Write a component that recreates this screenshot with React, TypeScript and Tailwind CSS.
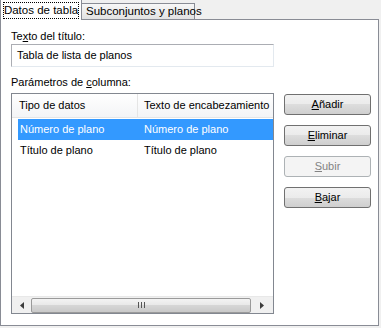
const font = { fontFamily: '"Liberation Sans", Arial, sans-serif' };

const Btn = ({ k, rest, disabled }: { k: string; rest: string; disabled?: boolean }) => (
  <button
    className={
      disabled
        ? "h-[21px] w-[87px] rounded-[3px] border border-[#adb2b5] bg-[#f4f4f4] text-[11px] text-[#838383] leading-none"
        : "h-[21px] w-[87px] rounded-[3px] border border-[#707070] bg-[linear-gradient(#f2f2f2_0%,#ebebeb_50%,#dddddd_50%,#cfcfcf_100%)] text-[11px] text-black leading-none"
    }
  >
    <span className="underline underline-offset-1">{k}</span>
    {rest}
  </button>
);

export default function App() {
  return (
    <div className="w-[381px] h-[328px] bg-[#f0f0f0] text-black text-[11px] leading-[13px]" style={font}>
      {/* tabs */}
      <div className="flex items-end h-[20px] relative z-10 -mb-px">
        <div className="w-[82px] h-[21px] border border-b-0 border-[#898c95] bg-white px-[2px] pt-[2px]">
          <div className="h-[17px] border border-dotted border-black flex items-center justify-center text-[11.5px] whitespace-nowrap">
            Datos de tabla
          </div>
        </div>
        <div className="w-[113px] h-[17px] border border-l-0 border-[#898c95] bg-[linear-gradient(#f7f7f7,#e2e2e2)] flex items-center pl-[4px] text-[11.5px] whitespace-nowrap">
          Subconjuntos y planos
        </div>
      </div>

      {/* panel */}
      <div className="w-[379px] h-[307px] border border-[#898c95] bg-white pl-[10px] pt-[10px]">
        <div>
          Te<span className="underline">x</span>to del título:
        </div>
        <div className="mt-px w-[263px] h-[23px] border border-[#abadb3] border-r-[#e3e9ef] border-b-[#e3e9ef] flex items-center pl-[5px]">
          Tabla de lista de planos
        </div>
        <div className="mt-[9px]">
          Parámetros de <span className="underline">c</span>olumna:
        </div>

        <div className="mt-[4px] flex">
          {/* list view */}
          <div className="w-[263px] h-[221px] border border-[#828790] flex flex-col bg-white">
            <div className="h-[24px] flex bg-[linear-gradient(#ffffff,#f3f4f6)] border-b border-[#e5e5e5]">
              <div className="w-[126px] border-r border-[#e5e5e5] flex items-center pl-[7px]">Tipo de datos</div>
              <div className="flex-1 flex items-center pl-[6px] whitespace-nowrap overflow-hidden">Texto de encabezamiento</div>
            </div>
            <div className="mt-px pl-[6px]">
              <div className="h-[21px] flex items-center bg-[#3399ff] text-white">
                <div className="w-[120px] pl-[2px]">Número de plano</div>
                <div className="pl-[6px]">Número de plano</div>
              </div>
              <div className="h-[21px] flex items-center">
                <div className="w-[120px] pl-[2px]">Título de plano</div>
                <div className="pl-[6px]">Título de plano</div>
              </div>
            </div>
            <div className="flex-1" />
            {/* horizontal scrollbar */}
            <div className="h-[17px] flex items-center bg-[#f0f0f0] border-t border-[#e8e8e8]">
              <div className="w-[19px] h-full flex items-center justify-center">
                <svg width="4" height="7" viewBox="0 0 4 7"><path d="M4 0V7L0 3.5Z" fill="#3c3c3c" /></svg>
              </div>
              <div className="w-[220px] h-[15px] rounded-[2px] border border-[#9a9a9a] bg-[linear-gradient(#f3f3f3_0%,#e8e8e8_50%,#d6d6d6_50%,#c9c9c9_100%)] flex items-center justify-center gap-[2px]">
                <div className="w-px h-[6px] bg-[#555]" />
                <div className="w-px h-[6px] bg-[#555]" />
                <div className="w-px h-[6px] bg-[#555]" />
              </div>
              <div className="flex-1 h-full flex items-center justify-center">
                <svg width="4" height="7" viewBox="0 0 4 7"><path d="M0 0V7L4 3.5Z" fill="#3c3c3c" /></svg>
              </div>
            </div>
          </div>

          {/* buttons */}
          <div className="ml-[10px] mt-px flex flex-col gap-[10px]">
            <Btn k="A" rest="ñadir" />
            <Btn k="E" rest="liminar" />
            <Btn k="S" rest="ubir" disabled />
            <Btn k="B" rest="ajar" />
          </div>
        </div>
      </div>
    </div>
  );
}
